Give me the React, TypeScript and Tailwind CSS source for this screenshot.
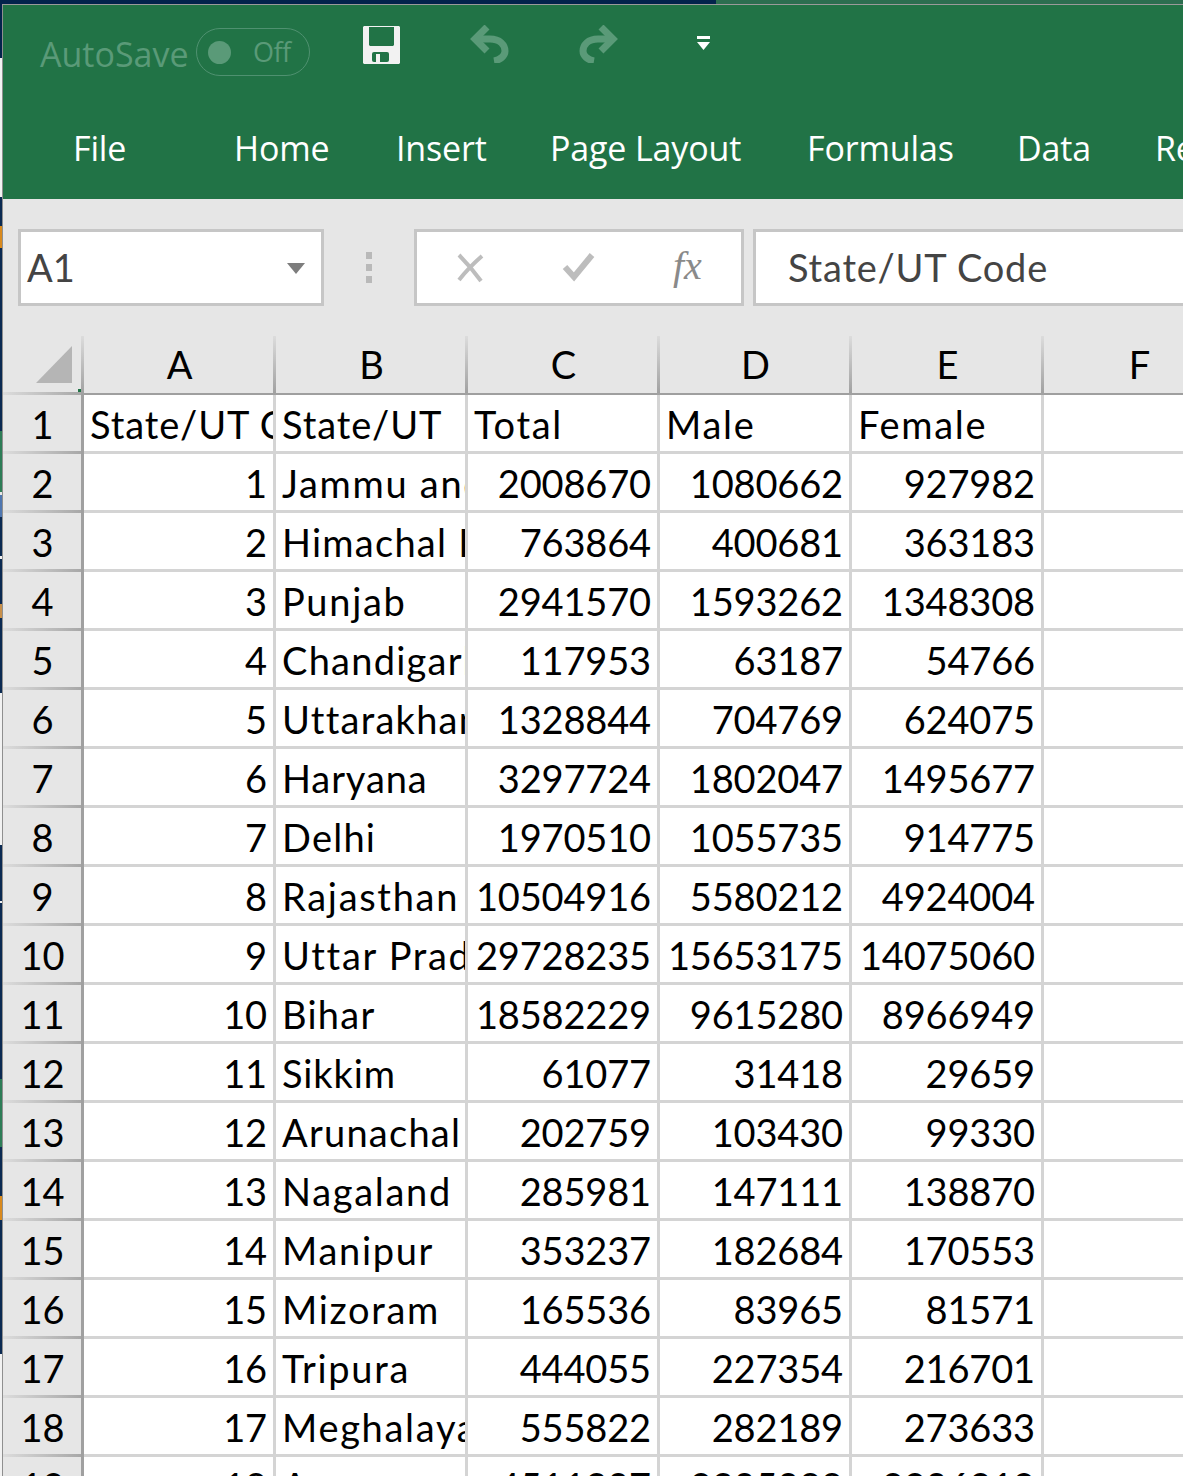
const rows: [string, string, string, string, string, string][] = [
  ["State/UT Code", "State/UT", "Total", "Male", "Female", ""],
  ["1", "Jammu and Kashmir", "2008670", "1080662", "927982", ""],
  ["2", "Himachal Pradesh", "763864", "400681", "363183", ""],
  ["3", "Punjab", "2941570", "1593262", "1348308", ""],
  ["4", "Chandigarh", "117953", "63187", "54766", ""],
  ["5", "Uttarakhand", "1328844", "704769", "624075", ""],
  ["6", "Haryana", "3297724", "1802047", "1495677", ""],
  ["7", "Delhi", "1970510", "1055735", "914775", ""],
  ["8", "Rajasthan", "10504916", "5580212", "4924004", ""],
  ["9", "Uttar Pradesh", "29728235", "15653175", "14075060", ""],
  ["10", "Bihar", "18582229", "9615280", "8966949", ""],
  ["11", "Sikkim", "61077", "31418", "29659", ""],
  ["12", "Arunachal Pradesh", "202759", "103430", "99330", ""],
  ["13", "Nagaland", "285981", "147111", "138870", ""],
  ["14", "Manipur", "353237", "182684", "170553", ""],
  ["15", "Mizoram", "165536", "83965", "81571", ""],
  ["16", "Tripura", "444055", "227354", "216701", ""],
  ["17", "Meghalaya", "555822", "282189", "273633", ""],
  ["18", "Assam", "4511307", "2305088", "2206219", ""],
];

const tabs = ["File", "Home", "Insert", "Page Layout", "Formulas", "Data", "Review"];
const tabClasses = ["w-[161px]", "w-[162px]", "w-[154px]", "w-[257px]", "w-[210px]", "w-[138px]", "w-[60px]"];
const cols = ["A", "B", "C", "D", "E", "F"];
const tighter = ["State/UT", "Haryana", "Sikkim", "State/UT Code"];
const medium = ["Himachal Pradesh", "Uttarakhand", "Arunachal Pradesh", "Delhi", "Bihar", "Chandigarh"];

const strip = [
  "h-[58px] bg-[#03234c]",
  "h-[139px] bg-[#f2f2f2]",
  "h-[29px] bg-[#0b2a52]",
  "h-[22px] bg-[#d98a1e]",
  "h-[183px] bg-[#0b2a52]",
  "h-[61px] bg-[#2e7d57]",
  "h-[3px] bg-[#e8e8e8]",
  "h-[22px] bg-[#4f77b0]",
  "h-[39px] bg-[#0b2a52]",
  "h-[3px] bg-[#f2f2f2]",
  "h-[45px] bg-[#0b2a52]",
  "h-[14px] bg-[#c9904a]",
  "h-[75px] bg-[#0b2a52]",
  "h-[152px] bg-[#f2f2f2]",
  "h-[56px] bg-[#0b2a52]",
  "h-[2px] bg-[#f2f2f2]",
  "h-[176px] bg-[#0b2a52]",
  "h-[68px] bg-[#2e7d57]",
  "h-[49px] bg-[#0b2a52]",
  "h-[24px] bg-[#d98a1e]",
  "h-[134px] bg-[#0b2a52]",
  "h-[122px] bg-[#f2f2f2]",
];

export default function App() {
  return (
    <div className="w-[1183px] h-[1476px] overflow-hidden bg-white flex font-['Lato',sans-serif]">
      <div className="w-[2px] shrink-0 flex flex-col">
        {strip.map((c, i) => (
          <div key={i} className={"shrink-0 " + c} />
        ))}
      </div>
      <div className="flex-1 min-w-0 flex flex-col">
        <div className="h-[5px] shrink-0 flex border-b border-[#9a9a9a]">
          <div className="w-[714px] bg-[#03234c]" />
          <div className="flex-1 bg-[#2c6e50]" />
        </div>
        <div className="flex-1 min-h-0 flex flex-col bg-white border-l border-[#8f8f8f]">
          <div className="h-[194px] shrink-0 bg-[#217346] text-white font-['Open_Sans',sans-serif] flex flex-col">
            <div className="h-[101px] flex items-start">
              <div className="mt-[28px] ml-[37px] text-[34px] leading-[42px] text-[#5a9a78] w-[156px] shrink-0">AutoSave</div>
              <div className="mt-[23px] w-[114px] h-[48px] rounded-full border border-[#4f9170] flex items-center shrink-0">
                <div className="ml-[11px] w-[23px] h-[23px] rounded-full bg-[#5a9a78] shrink-0" />
                <span className="ml-[22px] text-[27px] tracking-[-0.6px] text-[#5a9a78]">Off</span>
              </div>
              <svg className="mt-[21px] ml-[53px] shrink-0" width="37" height="38" viewBox="0 0 37 38">
                <path d="M0 1 1 0H36L37 1V37L36 38H1L0 37Z" fill="#f2f2f2" />
                <path d="M6 1H31V19L30 20H7L6 19Z" fill="#217346" />
                <rect x="9" y="26" width="17" height="10" rx="2" fill="#217346" />
                <rect x="13" y="28" width="4" height="8" fill="#f2f2f2" />
              </svg>
              <svg className="mt-[20px] ml-[70px] shrink-0" width="39" height="38" viewBox="0 0 39 38" fill="none" stroke="#5a9a78" strokeWidth="7">
                <path d="M17 2 5 14l12 12" />
                <path d="M5 14H20C30 14 35 20 35 26C35 31 30 35 24 36" />
              </svg>
              <svg className="mt-[20px] ml-[70px] shrink-0" width="39" height="38" viewBox="0 0 39 38" fill="none" stroke="#5a9a78" strokeWidth="7">
                <path d="M22 2 34 14 22 26" />
                <path d="M34 14H19C9 14 4 20 4 26C4 31 9 35 15 36" />
              </svg>
              <svg className="mt-[31px] ml-[78px] shrink-0" width="15" height="14" viewBox="0 0 15 14" fill="#fff">
                <rect x="1" y="0" width="13" height="3" />
                <path d="M1 6h13l-6.5 8z" />
              </svg>
            </div>
            <div className="flex h-[93px] pl-[70px] pt-[19px] text-[34px] leading-[46px] tracking-[-0.15px] overflow-hidden">
              {tabs.map((t, i) => (
                <div key={t} className={"shrink-0 " + tabClasses[i]}>{t}</div>
              ))}
            </div>
          </div>

          <div className="h-[137px] shrink-0 bg-[#e6e6e6] flex items-start pl-[15px] pt-[30px]">
            <div className="w-[306px] h-[77px] shrink-0 bg-white border-[3px] border-[#c6c6c6] flex items-center pl-[6px] relative">
              <span className="text-[38px] text-[#444]">A1</span>
              <svg className="absolute left-[266px] top-[31px]" width="18" height="12" viewBox="0 0 18 12"><path d="M0 0h18L9 11z" fill="#7d7d7d" /></svg>
            </div>
            <div className="w-[90px] h-[77px] shrink-0 flex flex-col items-center justify-center gap-[5px]">
              <div className="w-[6px] h-[7px] bg-[#b9b9b9]" />
              <div className="w-[6px] h-[7px] bg-[#b9b9b9]" />
              <div className="w-[6px] h-[7px] bg-[#b9b9b9]" />
            </div>
            <div className="w-[330px] h-[77px] shrink-0 bg-white border-[3px] border-[#c6c6c6] relative">
              <svg className="absolute left-[39px] top-[21px]" width="30" height="30" viewBox="0 0 30 30" fill="none" stroke="#bdbdbd" strokeWidth="4"><path d="M3 2c7 7 14 15 22 26M26 3C18 10 10 18 3 27" /></svg>
              <svg className="absolute left-[145px] top-[20px]" width="34" height="30" viewBox="0 0 34 30" fill="none" stroke="#bdbdbd" strokeWidth="6"><path d="M3 15l9 10L30 3" /></svg>
              <span className="absolute left-[256px] top-[9px] font-['Liberation_Serif',serif] italic text-[40px] leading-[50px] text-[#8a8a8a]">fx</span>
            </div>
            <div className="ml-[9px] flex-1 h-[77px] bg-white border-[3px] border-r-0 border-[#c6c6c6] flex items-center pl-[32px]">
              <span className="text-[38px] tracking-[0.8px] text-[#444]">State/UT Code</span>
            </div>
          </div>

          <div className="flex h-[59px] shrink-0 bg-[#e6e6e6] relative">
            <div className="w-[78px] shrink-0 relative flex flex-col">
              <div className="flex-1 relative">
                <svg className="absolute left-[33px] top-[10px]" width="36" height="37" viewBox="0 0 36 37"><path d="M36 0v37H0z" fill="#b5b5b5" /></svg>
                <div className="absolute left-[75px] top-[53px] w-[3px] h-[3px] bg-[#217346]" />
              </div>
              <div className="h-[3px] bg-linear-to-r from-[#dcdcdc] to-[#a8a8a8]" />
            </div>
            {cols.map((c) => (
              <div key={c} className="w-[192px] shrink-0 flex">
                <div className="w-[3px] shrink-0 bg-linear-to-b from-[#dcdcdc] to-[#9f9f9f]" />
                <div className="flex-1 flex flex-col">
                  <div className="flex-1 flex items-center justify-center pl-[2px] text-[38px] text-black">{c}</div>
                  <div className="h-[3px] bg-[#9f9f9f]" />
                </div>
              </div>
            ))}
          </div>

          {rows.map((r, i) => (
            <div key={i} className="flex h-[59px] shrink-0 overflow-hidden text-[38px] leading-[58px] text-black">
              <div className="w-[78px] shrink-0 bg-[#e6e6e6] flex flex-col">
                <div className="flex-1 min-h-0 overflow-hidden text-center pl-[1px]">{i + 1}</div>
                <div className="h-[3px] shrink-0 bg-linear-to-r from-[#dcdcdc] to-[#a8a8a8]" />
              </div>
              <div className="w-[3px] shrink-0 bg-[#a0a0a0]" />
              {r.map((v, j) => {
                const num = /^\d+$/.test(v);
                const track = tighter.includes(v) ? "tracking-[0.9px]" : medium.includes(v) ? "tracking-[1.25px]" : "tracking-[1.7px]";
                return (
                  <div key={j} className={"shrink-0 flex flex-col " + (j === 0 ? "w-[189px]" : "w-[192px] border-l-[3px] border-[#d4d4d4]")}>
                    <div className={"flex-1 min-h-0 overflow-hidden whitespace-nowrap " + (num ? "text-right pr-[6px] tracking-[-0.15px]" : "text-left pl-[6px] " + track)}>
                      {v}
                    </div>
                    <div className="h-[3px] shrink-0 bg-[#d4d4d4]" />
                  </div>
                );
              })}
            </div>
          ))}
        </div>
      </div>
    </div>
  );
}
